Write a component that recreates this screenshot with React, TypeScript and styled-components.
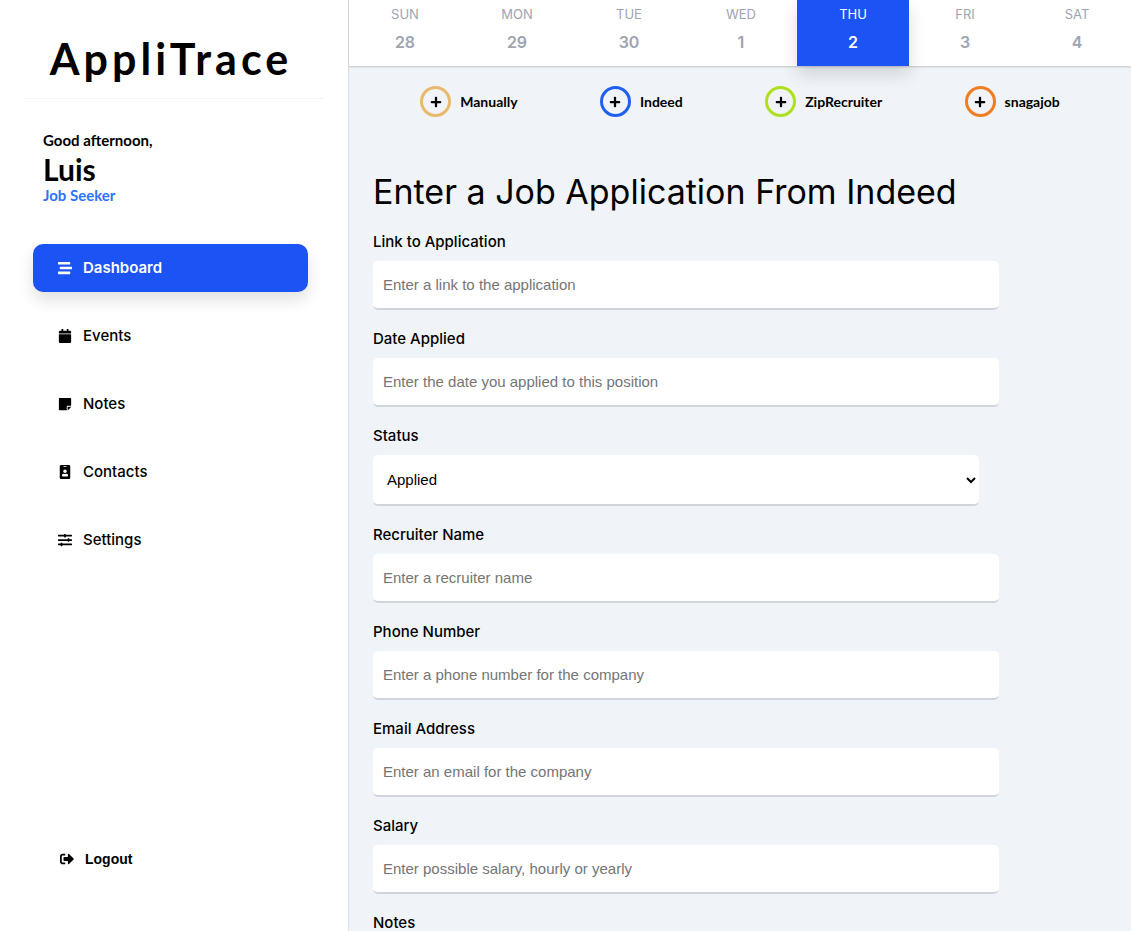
import React from "react";
import styled, { createGlobalStyle, css } from "styled-components";
import {
  FaCalendar,
  FaIdBadge,
  FaPlus,
  FaSignOutAlt,
  FaSlidersH,
  FaStickyNote,
  FaStream,
} from "react-icons/fa";

const display = `Inter, sans-serif`;
const rounded = `Lato, sans-serif`;
const plain = `"Liberation Sans", Arial, sans-serif`;
const blue = "#1c53f4";

const GlobalStyle = createGlobalStyle`
  *, *::before, *::after { box-sizing: border-box; }
  body { margin: 0; background: #f0f4f9; color: #000; font-family: ${display}; }
  h1, h2, p, ul, ol { margin: 0; padding: 0; }
  ul, ol { list-style: none; }
`;

const Shell = styled.div`
  display: grid;
  grid-template-columns: 348px minmax(0, 1fr);
  height: 100vh;
`;

const Sidebar = styled.aside`
  display: flex;
  flex-direction: column;
  padding: 32px 24px 60px;
  background: #fff;
  box-shadow: 0 0 2px rgba(0, 0, 0, 0.25);
`;

const Brand = styled.h1`
  padding: 0 6px 12px 0;
  border-bottom: 1px solid #f0f3f9;
  font: 700 43px/54px ${rounded};
  letter-spacing: 4px;
  text-align: center;
`;

const Greeting = styled.section`
  padding: 32px 19px 0;
  font: 700 15px/18px ${rounded};
`;

const UserName = styled.p`
  padding: 4px 0 1px;
  font: 700 30px/32px ${rounded};
`;

const Role = styled.p`
  color: #2f73fb;
`;

const Nav = styled.nav`
  padding: 40px 16px 0 9px;
`;

const NavList = styled.ul`
  display: flex;
  flex-direction: column;
  gap: 20px;
`;

const NavLink = styled.a<{ $active?: boolean }>`
  display: flex;
  align-items: center;
  height: 48px;
  padding: 0 25px;
  border-radius: 10px;
  color: #000;
  font: 500 15px/18px ${display};
  text-decoration: none;
  ${(p) =>
    p.$active &&
    css`
      background: ${blue};
      color: #fff;
      font-weight: 600;
      box-shadow: 0 8px 16px rgba(0, 0, 0, 0.12);
    `}
`;

const NavIcon = styled.span`
  display: flex;
  width: 25px;
  svg {
    width: auto;
    height: 14px;
  }
`;

const Logout = styled.button`
  display: flex;
  align-items: center;
  gap: 11px;
  align-self: flex-start;
  margin: auto 0 0 36px;
  padding: 0;
  border: 0;
  background: none;
  color: #000;
  font: 700 14px/24px ${plain};
  cursor: pointer;
`;

const Main = styled.main`
  min-width: 0;
  overflow-x: hidden;
  overflow-y: auto;
  scrollbar-width: none;
  padding-left: 1px;
`;

const Week = styled.ol`
  display: grid;
  grid-template-columns: repeat(7, minmax(112px, 1fr));
  background: #fff;
  box-shadow: 0 1px 2px rgba(0, 0, 0, 0.2);
`;

const Day = styled.li<{ $active?: boolean }>`
  display: flex;
  flex-direction: column;
  align-items: center;
  gap: 9px;
  height: 66px;
  padding-top: 5px;
  color: #a0a3b1;
  ${(p) =>
    p.$active &&
    css`
      background: ${blue};
      color: #fff;
      box-shadow: 0 8px 16px rgba(0, 0, 0, 0.14);
    `}
`;

const DayName = styled.span`
  font: 400 13px/18px ${display};
`;

const DayNumber = styled.span`
  font: 600 16px/20px ${display};
`;

const Sources = styled.div`
  display: flex;
  justify-content: space-around;
  padding: 20px 30px 0;
`;

const Source = styled.button`
  display: flex;
  align-items: center;
  gap: 9px;
  padding: 0;
  border: 0;
  background: none;
  color: #000;
  font: 700 14px/18px ${rounded};
  cursor: pointer;
`;

const Ring = styled.span<{ $color: string }>`
  display: grid;
  place-items: center;
  width: 31px;
  height: 31px;
  border: 3px solid ${(p) => p.$color};
  border-radius: 50%;
`;

const Form = styled.form`
  width: 80%;
  margin: 54px 0 0 24px;
`;

const Title = styled.h2`
  font: 400 34px/42px ${display};
  margin-bottom: 20px;
  white-space: nowrap;
`;

const Field = styled.div`
  display: flex;
  flex-direction: column;
  gap: 10px;
  margin-bottom: 20px;
`;

const Label = styled.label`
  font: 500 15px/18px ${display};
`;

const control = css`
  border: 0;
  border-bottom: 2px solid #d1d5db;
  border-radius: 5px;
  background: #fff;
  color: #000;
  font: 400 15px/18px ${plain};
`;

const Input = styled.input`
  ${control}
  height: 49px;
  padding: 0 10px;
  &::placeholder { color: #757575; }
`;

const Select = styled.select`
  ${control}
  height: 51px;
  margin-right: 20px;
  padding: 0 10px;
`;

const TextArea = styled.textarea`
  ${control}
  height: 120px;
  padding: 10px;
`;

const navItems = [
  { label: "Dashboard", icon: FaStream, active: true },
  { label: "Events", icon: FaCalendar },
  { label: "Notes", icon: FaStickyNote },
  { label: "Contacts", icon: FaIdBadge },
  { label: "Settings", icon: FaSlidersH },
];

const days = [
  ["SUN", 28],
  ["MON", 29],
  ["TUE", 30],
  ["WED", 1],
  ["THU", 2],
  ["FRI", 3],
  ["SAT", 4],
] as const;

const sources = [
  { name: "Manually", color: "#e8b96a" },
  { name: "Indeed", color: "#2060f0" },
  { name: "ZipRecruiter", color: "#aee01f" },
  { name: "snagajob", color: "#f17d23" },
];

type FieldSpec = { id: string; label: string; hint?: string };

const fields: FieldSpec[] = [
  { id: "link", label: "Link to Application", hint: "Enter a link to the application" },
  { id: "date", label: "Date Applied", hint: "Enter the date you applied to this position" },
  { id: "status", label: "Status" },
  { id: "recruiter", label: "Recruiter Name", hint: "Enter a recruiter name" },
  { id: "phone", label: "Phone Number", hint: "Enter a phone number for the company" },
  { id: "email", label: "Email Address", hint: "Enter an email for the company" },
  { id: "salary", label: "Salary", hint: "Enter possible salary, hourly or yearly" },
];

export default function App() {
  return (
    <Shell>
      <GlobalStyle />
      <Sidebar>
        <Brand>AppliTrace</Brand>
        <Greeting>
          <p>Good afternoon,</p>
          <UserName>Luis</UserName>
          <Role>Job Seeker</Role>
        </Greeting>
        <Nav>
          <NavList>
            {navItems.map(({ label, icon: Icon, active }) => (
              <li key={label}>
                <NavLink href="#" $active={active}>
                  <NavIcon><Icon /></NavIcon>
                  {label}
                </NavLink>
              </li>
            ))}
          </NavList>
        </Nav>
        <Logout type="button">
          <FaSignOutAlt size={14} />
          Logout
        </Logout>
      </Sidebar>
      <Main>
        <Week>
          {days.map(([name, date]) => (
            <Day key={name} $active={date === 2}>
              <DayName>{name}</DayName>
              <DayNumber>{date}</DayNumber>
            </Day>
          ))}
        </Week>
        <Sources>
          {sources.map(({ name, color }) => (
            <Source key={name} type="button">
              <Ring $color={color}><FaPlus size={12} /></Ring>
              {name}
            </Source>
          ))}
        </Sources>
        <Form>
          <Title>Enter a Job Application From Indeed</Title>
          {fields.map(({ id, label, hint }) => (
            <Field key={id}>
              <Label htmlFor={id}>{label}</Label>
              {hint ? (
                <Input id={id} type="text" placeholder={hint} />
              ) : (
                <Select id={id} defaultValue="Applied">
                  <option>Applied</option>
                </Select>
              )}
            </Field>
          ))}
          <Field>
            <Label htmlFor="notes">Notes</Label>
            <TextArea id="notes" />
          </Field>
        </Form>
      </Main>
    </Shell>
  );
}
